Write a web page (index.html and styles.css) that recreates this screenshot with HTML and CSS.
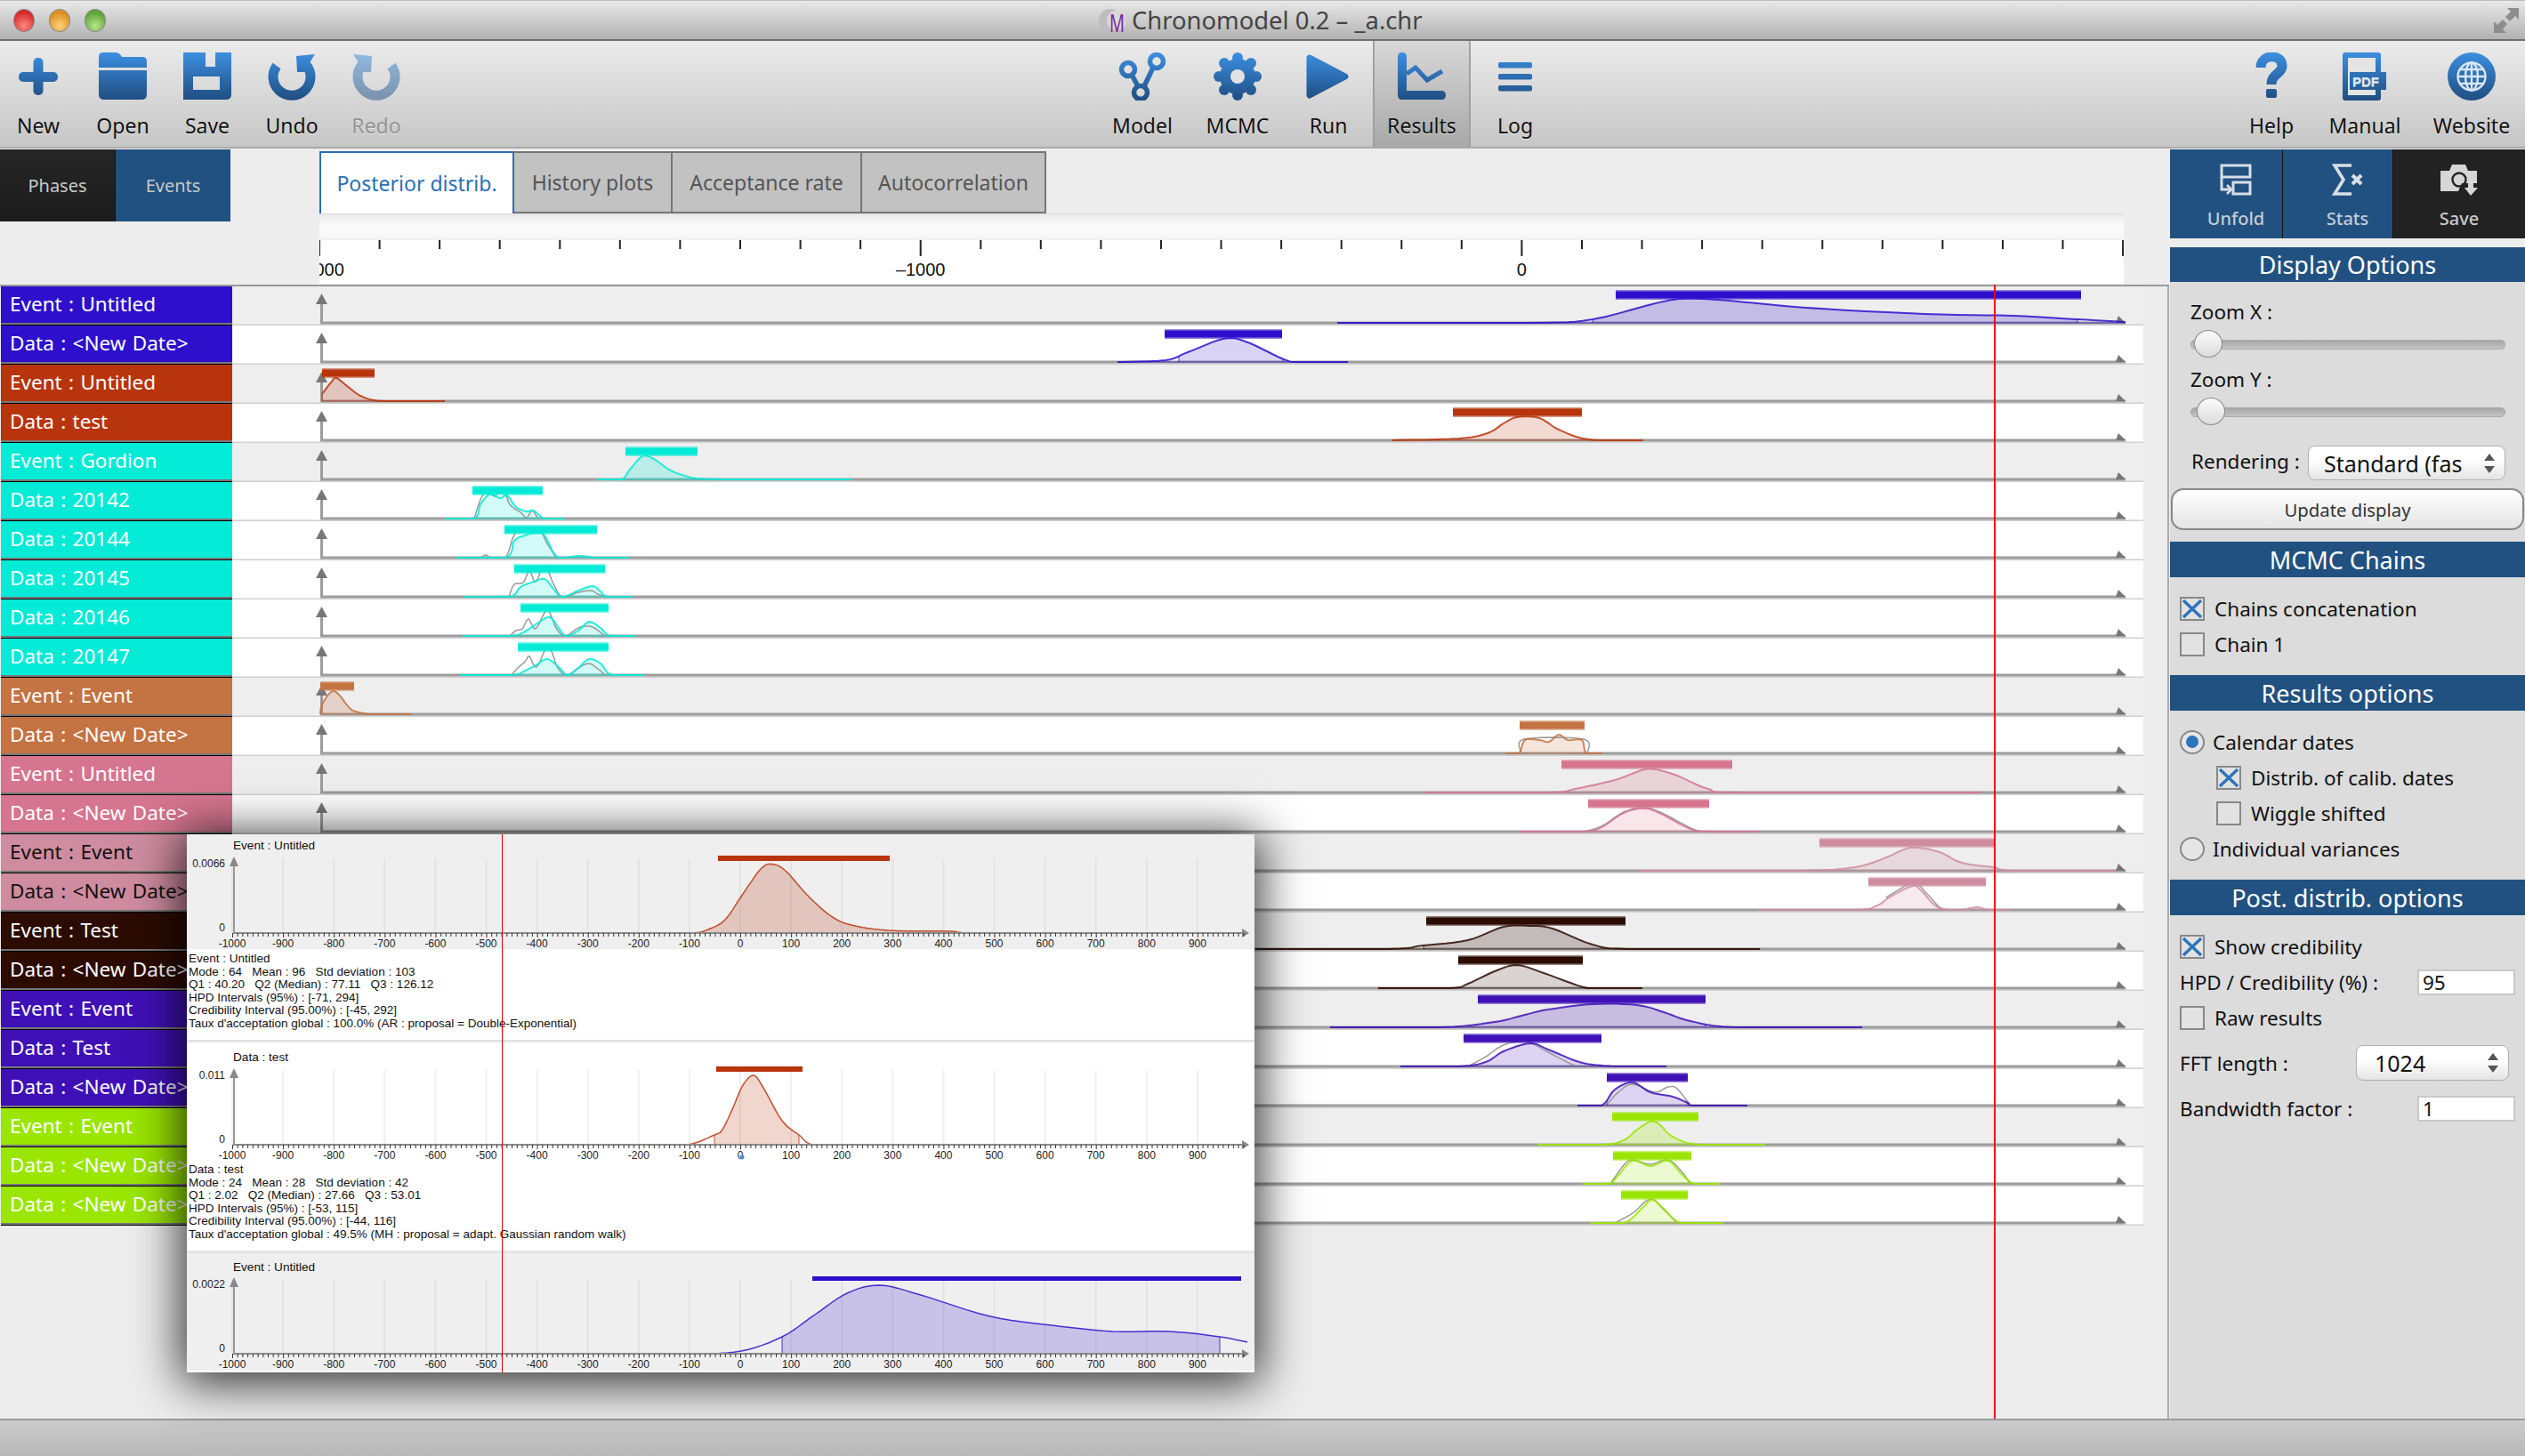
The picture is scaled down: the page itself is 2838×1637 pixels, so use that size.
FILE: index.html
```html
<!DOCTYPE html>
<html lang="en">
<head>
    <meta charset="UTF-8">
    <title>Chronomodel 0.2 - _a.chr</title>
    <link rel="stylesheet" href="styles.css">
</head>
<body>
    <svg class="defs" width="0" height="0">
        <defs>
            <linearGradient id="blue" gradientUnits="userSpaceOnUse" x1="0" y1="0" x2="0" y2="54">
                <stop offset="0" stop-color="#3c8fe2"/>
                <stop offset="1" stop-color="#1f4d80"/>
            </linearGradient>
        </defs>
    </svg>

    <div class="window">
        <div class="titlebar">
            <div class="lights">
                <span class="light light-red"></span>
                <span class="light light-yellow"></span>
                <span class="light light-green"></span>
            </div>
            <svg class="app-logo" width="32" height="40" viewBox="0 0 32 40">
                <circle cx="15" cy="20" r="13" fill="#bdbdbd"/>
                <circle cx="22" cy="20" r="11" fill="#d8d8d8"/>
                <text x="14" y="33" class="logo-m" textLength="17" lengthAdjust="spacingAndGlyphs">M</text>
            </svg>
            <span class="title-text">Chronomodel 0.2 – _a.chr</span>
            <svg class="fullscreen" width="30" height="30" viewBox="0 0 30 30">
                <path d="M16 1H29V14L25 10L19 16L14 11L20 5Z" fill="#8e8e8e"/>
                <path d="M1 16V29H15L11 25L16 19L11 14L5 20Z" fill="#8e8e8e"/>
            </svg>
        </div>

        <div class="toolbar">
            <div class="tool-group tool-group-left">
                <div class="tool">
                    <svg class="tool-icon" viewBox="0 0 54 54"><rect x="5" y="22" width="44" height="11" rx="5" fill="url(#blue)"/><rect x="21.5" y="6" width="11" height="42" rx="5" fill="url(#blue)"/></svg>
                    <span>New</span>
                </div>
                <div class="tool">
                    <svg class="tool-icon" viewBox="0 0 54 54"><path d="M0 17V5Q0 0 5 0H19Q23 0 26 5H49Q54 5 54 10V17Z" fill="url(#blue)"/><path d="M0 20H54V47Q54 53 48 53H6Q0 53 0 47Z" fill="url(#blue)"/></svg>
                    <span>Open</span>
                </div>
                <div class="tool">
                    <svg class="tool-icon" viewBox="0 0 54 54"><path fill-rule="evenodd" d="M0 0H54V47Q54 53 48 53H0ZM25 0V16H36V0ZM11 27V42H41V27Z" fill="url(#blue)"/></svg>
                    <span>Save</span>
                </div>
                <div class="tool">
                    <svg class="tool-icon" viewBox="0 0 54 54"><path d="M10 15A21 21 0 1 0 44 15" fill="none" stroke="url(#blue)" stroke-width="11"/><polygon points="32,4 53,2 48,10 46,22 33,22" fill="url(#blue)"/></svg>
                    <span>Undo</span>
                </div>
                <div class="tool tool-disabled">
                    <svg class="tool-icon" viewBox="0 0 54 54"><path d="M10 15A21 21 0 1 0 44 15" fill="none" stroke="url(#blue)" stroke-width="11"/><polygon points="22,4 1,2 6,10 8,22 21,22" fill="url(#blue)"/></svg>
                    <span>Redo</span>
                </div>
            </div>

            <div class="tool-group tool-group-center">
                <div class="tool w110">
                    <svg class="tool-icon" viewBox="0 0 54 54" fill="none" stroke="url(#blue)" stroke-width="5.5"><circle cx="11" cy="19" r="7.5"/><circle cx="43" cy="10" r="7.5"/><circle cx="25" cy="45" r="7.5"/><path d="M15 25L22 38M39 17L29 38"/></svg>
                    <span>Model</span>
                </div>
                <div class="tool w104">
                    <svg class="tool-icon" viewBox="0 0 54 54"><g fill="url(#blue)"><circle cx="27" cy="27" r="20"/><circle cx="27" cy="6" r="6"/><circle cx="27" cy="48" r="6"/><circle cx="6" cy="27" r="6"/><circle cx="48" cy="27" r="6"/><circle cx="12" cy="12" r="6"/><circle cx="42" cy="12" r="6"/><circle cx="12" cy="42" r="6"/><circle cx="42" cy="42" r="6"/></g><circle cx="27" cy="27" r="8" fill="#e2e2e2"/></svg>
                    <span>MCMC</span>
                </div>
                <div class="tool w100">
                    <svg class="tool-icon" viewBox="0 0 54 54"><polygon points="6,6 46,27 6,48" fill="url(#blue)" stroke="url(#blue)" stroke-width="7" stroke-linejoin="round"/></svg>
                    <span>Run</span>
                </div>
                <div class="tool w110 tool-active">
                    <svg class="tool-icon" viewBox="0 0 54 54"><path d="M0 5Q0 0 5 0T10 5V43H49Q54 43 54 48T49 53H5Q0 53 0 48Z" fill="url(#blue)"/><polyline points="10,24 20,17 33,31 50,21" fill="none" stroke="url(#blue)" stroke-width="5"/></svg>
                    <span>Results</span>
                </div>
                <div class="tool w100">
                    <svg class="tool-icon" viewBox="0 0 54 54"><rect x="8" y="11" width="38" height="6.5" rx="2" fill="url(#blue)"/><rect x="8" y="24" width="38" height="6.5" rx="2" fill="url(#blue)"/><rect x="8" y="37" width="38" height="6.5" rx="2" fill="url(#blue)"/></svg>
                    <span>Log</span>
                </div>
            </div>

            <div class="tool-group tool-group-right">
                <div class="tool w90">
                    <svg class="tool-icon" viewBox="0 0 54 54"><path d="M15 17C15 1 39 1 39 15C39 25 27 23 27 36" fill="none" stroke="url(#blue)" stroke-width="11"/><rect x="21" y="41" width="12" height="10" rx="2" fill="url(#blue)"/></svg>
                    <span>Help</span>
                </div>
                <div class="tool w120">
                    <svg class="tool-icon" viewBox="0 0 54 54"><rect x="2" y="0" width="43" height="54" rx="3" fill="url(#blue)"/><rect x="8" y="6" width="31" height="42" fill="#e4e4e4"/><rect x="10" y="22" width="41" height="20" fill="url(#blue)"/><text x="13" y="38" class="pdf-text">PDF</text></svg>
                    <span>Manual</span>
                </div>
                <div class="tool w120">
                    <svg class="tool-icon" viewBox="0 0 54 54"><circle cx="27" cy="27" r="27" fill="url(#blue)"/><g fill="none" stroke="#dbe6f2" stroke-width="2.4"><circle cx="27" cy="27" r="15.5"/><ellipse cx="27" cy="27" rx="7" ry="15.5"/><path d="M27 11V43M11 27H43M13 19H41M13 35H41"/></g></svg>
                    <span>Website</span>
                </div>
            </div>
        </div>

        <div class="main">
            <div class="results">
                <div class="head">
                    <div class="side-tabs">
                        <div class="side-tab side-tab-dark">Phases</div>
                        <div class="side-tab side-tab-blue">Events</div>
                    </div>
                    <div class="graph-head">
                        <div class="tabs">
                            <div class="tab tab-active">Posterior distrib.</div>
                            <div class="tab tab-history">History plots</div>
                            <div class="tab tab-accept">Acceptance rate</div>
                            <div class="tab tab-auto">Autocorrelation</div>
                        </div>
                        <div class="ruler-fade"></div>
                        <svg class="ruler" id="ruler" viewBox="359 271 2028 49"></svg>
                    </div>
                </div>
                <div class="rows" id="rows"></div>
                <div class="cursor"></div>
            </div>

            <div class="panel">
                <div class="panel-buttons">
                    <div class="panel-btn panel-btn-unfold">
                        <svg width="36" height="36" viewBox="0 0 36 36" fill="none" stroke="#d8dfe6" stroke-width="3"><rect x="2" y="2" width="32" height="13"/><rect x="15" y="21" width="19" height="13"/><path d="M2 15V29H11"/><path d="M8 24L13 29L8 34" stroke-width="2.5"/></svg>
                        <span>Unfold</span>
                    </div>
                    <div class="panel-btn panel-btn-stats">
                        <svg width="36" height="36" viewBox="0 0 36 36" fill="none" stroke="#d8dfe6"><path d="M22 2H3L13 18L3 34H22" stroke-width="3.6"/><path d="M23 13L33 23M33 13L23 23" stroke-width="4"/></svg>
                        <span>Stats</span>
                    </div>
                    <div class="panel-btn panel-btn-save">
                        <svg width="42" height="36" viewBox="0 0 42 36"><path d="M0 31V8H10L13 1H28L31 8H41V22H24L20 31Z" fill="#d6d6d6"/><circle cx="21" cy="18" r="7.5" fill="none" stroke="#222" stroke-width="2.4"/><path d="M31 20V27H27L34 36L42 27H37V20Z" fill="#d6d6d6"/></svg>
                        <span>Save</span>
                    </div>
                </div>

                <div class="section-title section-title-first">Display Options</div>
                <div class="section-body section-display">
                    <div class="opt opt-label">Zoom X :</div>
                    <div class="slider"><span class="knob knob-x"></span></div>
                    <div class="opt opt-label opt-zoomy">Zoom Y :</div>
                    <div class="slider"><span class="knob knob-y"></span></div>
                    <div class="render-row">
                        <span class="render-label">Rendering :</span>
                        <div class="select select-render">
                            <span>Standard (fas</span>
                            <svg width="12" height="24" viewBox="0 0 12 24"><path d="M6 1L12 9H0ZM6 23L0 15H12Z" fill="#555"/></svg>
                        </div>
                    </div>
                    <div class="update-btn">Update display</div>
                </div>

                <div class="section-title">MCMC Chains</div>
                <div class="section-body">
                    <div class="opt"><span class="check"><svg width="24" height="23" viewBox="0 0 24 23"><path d="M2 2L22 21M22 2L2 21" stroke="#2d74bb" stroke-width="3.4"/></svg></span>Chains concatenation</div>
                    <div class="opt"><span class="check"></span>Chain 1</div>
                </div>

                <div class="section-title">Results options</div>
                <div class="section-body">
                    <div class="opt"><span class="radio radio-on"></span>Calendar dates</div>
                    <div class="opt opt-sub"><span class="check"><svg width="24" height="23" viewBox="0 0 24 23"><path d="M2 2L22 21M22 2L2 21" stroke="#2d74bb" stroke-width="3.4"/></svg></span>Distrib. of calib. dates</div>
                    <div class="opt opt-sub"><span class="check"></span>Wiggle shifted</div>
                    <div class="opt"><span class="radio"></span>Individual variances</div>
                </div>

                <div class="section-title">Post. distrib. options</div>
                <div class="section-body section-last">
                    <div class="opt"><span class="check"><svg width="24" height="23" viewBox="0 0 24 23"><path d="M2 2L22 21M22 2L2 21" stroke="#2d74bb" stroke-width="3.4"/></svg></span>Show credibility</div>
                    <div class="opt opt-between">HPD / Credibility (%) :<span class="input">95</span></div>
                    <div class="opt"><span class="check"></span>Raw results</div>
                    <div class="opt opt-fft">FFT length :
                        <div class="select select-fft">
                            <span>1024</span>
                            <svg width="12" height="24" viewBox="0 0 12 24"><path d="M6 1L12 9H0ZM6 23L0 15H12Z" fill="#555"/></svg>
                        </div>
                    </div>
                    <div class="opt opt-between opt-band">Bandwidth factor :<span class="input">1</span></div>
                </div>
            </div>
        </div>

        <div class="statusbar"></div>

        <!-- Detached results window -->
        <div class="popup">
            <svg class="chart chart-grey" id="chart1" viewBox="210 938 1200 129"></svg>
            <div class="stats">
                <div>Event : Untitled</div>
                <div>Mode : 64 &nbsp; Mean : 96 &nbsp; Std deviation : 103</div>
                <div>Q1 : 40.20 &nbsp; Q2 (Median) : 77.11 &nbsp; Q3 : 126.12</div>
                <div>HPD Intervals (95%) : [-71, 294]</div>
                <div>Credibility Interval (95.00%) : [-45, 292]</div>
                <div>Taux d'acceptation global : 100.0% (AR : proposal = Double-Exponential)</div>
            </div>
            <svg class="chart chart-white" id="chart2" viewBox="210 1172 1200 132"></svg>
            <div class="stats">
                <div>Data : test</div>
                <div>Mode : 24 &nbsp; Mean : 28 &nbsp; Std deviation : 42</div>
                <div>Q1 : 2.02 &nbsp; Q2 (Median) : 27.66 &nbsp; Q3 : 53.01</div>
                <div>HPD Intervals (95%) : [-53, 115]</div>
                <div>Credibility Interval (95.00%) : [-44, 116]</div>
                <div>Taux d'acceptation global : 49.5% (MH : proposal = adapt. Gaussian random walk)</div>
            </div>
            <svg class="chart chart-grey chart-last" id="chart3" viewBox="210 1411 1200 132"></svg>
            <div class="popup-cursor"></div>
        </div>
    </div>

    <script src="script.js"></script>
</body>
</html>
```

FILE: styles.css
```css
* {
    box-sizing: border-box;
}

body {
    margin: 0;
    font-family: "Noto Sans", "DejaVu Sans", sans-serif;
    background: #ededed;
    color: #111;
}

.defs {
    display: block;
    height: 0;
}

.window {
    position: relative;
    width: 2838px;
    height: 1637px;
    overflow: hidden;
    display: flex;
    flex-direction: column;
    background: #ededed;
}

/* title bar */
.titlebar {
    height: 46px;
    flex: none;
    display: flex;
    align-items: center;
    padding-left: 15px;
    background: linear-gradient(#e8e8e8, #b2b2b2);
    border-top: 1px solid #bbb;
    border-bottom: 2px solid #707070;
}

.lights {
    display: flex;
    gap: 16px;
}

.light {
    width: 24px;
    height: 26px;
    border-radius: 50%;
    border: 1px solid #8a8a8a;
}

.light-red {
    background: radial-gradient(circle at 50% 75%, #ff8a80, #d62a2c 70%);
}

.light-yellow {
    background: radial-gradient(circle at 50% 75%, #ffd27a, #dc8f1e 70%);
}

.light-green {
    background: radial-gradient(circle at 50% 75%, #b8e68a, #5fa53a 70%);
}

.app-logo {
    margin-left: 1114px;
}

.logo-m {
    font: 27px "Noto Sans", sans-serif;
    fill: #7b2a98;
}

.title-text {
    margin-left: 7px;
    font-size: 27.4px;
    color: #444;
}

.fullscreen {
    margin-left: auto;
    margin-right: 6px;
}

/* toolbar */
.toolbar {
    height: 121px;
    flex: none;
    display: flex;
    background: linear-gradient(#ebebeb, #c6c6c6);
    border-bottom: 2px solid #aaa;
}

.tool-group {
    display: flex;
}

.tool-group-left {
    gap: 9px;
}

.tool-group-center {
    margin-left: 763px;
}

.tool-group-right {
    margin-left: auto;
}

.tool {
    width: 86px;
    display: flex;
    flex-direction: column;
    align-items: center;
    padding-top: 13px;
    font-size: 23px;
    line-height: 30px;
    text-shadow: 0 1px 0 rgba(255, 255, 255, 0.6);
}

.tool-icon {
    width: 54px;
    height: 54px;
    margin-bottom: 13px;
    display: block;
}

.tool-disabled {
    color: #949494;
}

.tool-disabled .tool-icon {
    opacity: 0.5;
}

.tool-active {
    background: linear-gradient(#d8d8d8, #a8a8a8);
    border-left: 2px solid #a0a0a0;
    border-right: 2px solid #a0a0a0;
}

.w90 { width: 90px; }
.w100 { width: 100px; }
.w104 { width: 104px; }
.w110 { width: 110px; }
.w120 { width: 120px; }

/* main area */
.main {
    flex: 1;
    display: flex;
    min-height: 0;
}

.results {
    position: relative;
    width: 2438px;
    flex: none;
    display: flex;
    flex-direction: column;
}

.head {
    height: 155px;
    flex: none;
    display: flex;
    border-bottom: 2px solid #999;
}

.side-tabs {
    width: 259px;
    height: 81px;
    flex: none;
    display: flex;
    margin-top: 1px;
    gap: 1px;
    background: #111;
}

.side-tab {
    flex: 1;
    display: flex;
    align-items: center;
    justify-content: center;
    font-size: 20px;
    color: #c9c9c9;
}

.side-tab-dark {
    background: linear-gradient(#262626, #1c1c1c);
}

.side-tab-blue {
    background: #215180;
}

.graph-head {
    width: 2028px;
    margin-left: 100px;
    flex: none;
    display: flex;
    flex-direction: column;
}

.tabs {
    height: 71px;
    margin-top: 3px;
    flex: none;
    display: flex;
    border-bottom: 1px solid #dcdcdc;
}

.tab {
    height: 70px;
    display: flex;
    align-items: center;
    justify-content: center;
    background: #c2c2c2;
    border: 2px solid #777;
    border-left: none;
    font-size: 23px;
    color: #555;
}

.tab-active {
    width: 219px;
    background: #fff;
    border-color: #2c6fb5;
    border-left: 2px solid #2c6fb5;
    border-bottom: none;
    color: #2c6fb5;
}

.tab-history { width: 178px; }
.tab-accept { width: 213px; }
.tab-auto { width: 207px; }

.ruler-fade {
    height: 29px;
    flex: none;
    background: linear-gradient(#e9e9e9, #fbfbfb 40%, #f8f8f8 85%, #efefef);
}

.ruler {
    display: block;
    width: 2028px;
    height: 49px;
    flex: none;
    background: #fff;
}

.ruler-label {
    font: 20px "Liberation Sans", sans-serif;
    text-anchor: middle;
    fill: #111;
}

.rows {
    flex: 1;
    border-right: 2px solid #adadad;
}

.row {
    height: 44px;
    display: flex;
}

.row-label {
    width: 260px;
    margin-left: 1px;
    flex: none;
    display: flex;
    align-items: center;
    padding: 0 0 4px 10px;
    font-size: 22.5px;
    word-spacing: 1.5px;
    color: #fff;
    border-bottom: 1px solid #000;
    box-shadow: inset 0 -2px 0 #777;
    white-space: nowrap;
    overflow: hidden;
}

.row-blue { background: #2e10cc; }
.row-red { background: #b8340c; }
.row-cyan { background: #03ebd6; }
.row-orange { background: #c47343; }
.row-pink { background: #d67590; }
.row-rose { background: #cf8ca0; color: #111; }
.row-brown { background: #2c0b00; }
.row-indigo { background: #3f10b6; }
.row-lime { background: #9ae600; }

.plot {
    display: block;
    width: 2148px;
    height: 44px;
    flex: none;
    background: #fff;
}

.plot-event {
    background: #eee;
}

.cursor {
    position: absolute;
    left: 2241px;
    top: 153px;
    bottom: 0;
    width: 2px;
    background: #f00;
}

/* right panel */
.panel {
    flex: 1;
    margin-left: 1px;
    display: flex;
    flex-direction: column;
    font-size: 22.5px;
    color: #111;
}

.panel-buttons {
    height: 100px;
    margin-top: 1px;
    flex: none;
    display: flex;
    gap: 1px;
    background: #111;
}

.panel-btn {
    display: flex;
    flex-direction: column;
    align-items: center;
    padding-top: 16px;
    font-size: 20px;
    font-weight: 500;
    line-height: 26px;
    color: #c4ccd4;
}

.panel-btn span {
    margin-top: 13px;
}

.panel-btn-unfold {
    width: 126px;
    padding-left: 22px;
    background: #215180;
}

.panel-btn-stats {
    width: 123px;
    padding-left: 22px;
    background: #215180;
}

.panel-btn-save {
    flex: 1;
    background: #222;
    color: #ccc;
}

.section-title {
    height: 40px;
    flex: none;
    display: flex;
    align-items: center;
    justify-content: center;
    background: #215180;
    color: #fff;
    font-size: 27px;
}

.section-title-first {
    height: 39px;
    margin-top: 10px;
}

.section-body {
    flex: none;
    padding: 15px 0;
    background: #dcdcdc;
}

.section-last {
    flex: 1;
}

.section-display {
    padding: 13px 0;
}

.opt {
    height: 40px;
    display: flex;
    align-items: center;
    padding-left: 11px;
    white-space: nowrap;
}

.opt-label {
    padding-left: 23px;
}

.opt-zoomy {
    margin: 3px 0 1px;
}

.opt-sub {
    padding-left: 52px;
}

.opt-between {
    justify-content: space-between;
    padding-right: 11px;
}

.opt-fft {
    justify-content: space-between;
    padding-right: 18px;
    margin-top: 11px;
}

.opt-band {
    margin-top: 11px;
}

.check,
.radio {
    width: 28px;
    height: 27px;
    flex: none;
    margin-right: 11px;
    display: flex;
    align-items: center;
    justify-content: center;
    border: 2px solid #888;
    background: #e2e2e2;
}

.radio {
    margin-right: 9px;
    border-radius: 50%;
    background: #e6e6e6;
}

.radio-on::after {
    content: "";
    width: 14px;
    height: 14px;
    border-radius: 50%;
    background: #2d74bb;
}

.slider {
    position: relative;
    height: 32px;
    margin: 1px 22px 0 23px;
    display: flex;
    align-items: center;
}

.slider::before {
    content: "";
    width: 100%;
    height: 9px;
    border-radius: 5px;
    background: linear-gradient(#a6a6a6, #c4c4c4);
    border: 1px solid #aaa;
}

.knob {
    position: absolute;
    top: 0;
    width: 32px;
    height: 31px;
    border-radius: 50%;
    border: 1px solid #8c8c8c;
    background: linear-gradient(#fbfbfb, #dcdcdc);
}

.knob-x { left: 4px; }
.knob-y { left: 7px; }

.render-row {
    height: 39px;
    margin-top: 22px;
    padding: 0 22px 0 24px;
    display: flex;
    align-items: center;
    justify-content: space-between;
}

.render-label {
    margin-bottom: 5px;
}

.select {
    height: 100%;
    display: flex;
    align-items: center;
    justify-content: space-between;
    background: linear-gradient(#fff 40%, #e4e4e4);
    border: 1px solid #b0b0b0;
    border-radius: 8px;
}

.select-render {
    width: 222px;
    padding: 0 11px 0 17px;
    font-size: 25px;
}

.select-fft {
    width: 172px;
    height: 40px;
    padding: 0 11px 0 20px;
    font-size: 25px;
}

.update-btn {
    height: 47px;
    margin: 9px 1px 0 1px;
    display: flex;
    align-items: center;
    justify-content: center;
    background: linear-gradient(#fff, #e4e4e4);
    border: 2px solid #888;
    border-radius: 14px;
    color: #333;
    font-size: 20.3px;
}

.input {
    width: 110px;
    height: 29px;
    padding-left: 4px;
    display: flex;
    align-items: center;
    background: #fff;
    border: 2px solid #c8c8c8;
}

.statusbar {
    height: 42px;
    flex: none;
    background: linear-gradient(#cbcbcb, #b8b8b8);
    border-top: 2px solid #9a9a9a;
}

/* detached results window */
.popup {
    position: absolute;
    left: 210px;
    top: 938px;
    width: 1200px;
    height: 605px;
    display: flex;
    flex-direction: column;
    background: #fff;
    box-shadow: 0 6px 50px 6px rgba(0, 0, 0, 0.8);
}

.chart {
    display: block;
    width: 1200px;
    height: 132px;
    flex: none;
}

#chart1 {
    height: 129px;
}

.chart-grey {
    background: #efefef;
}

.chart-white {
    background: #fff;
}

.chart-title {
    font: 13.6px "Liberation Sans", sans-serif;
    fill: #111;
}

.chart-tick {
    font: 12px "Liberation Sans", sans-serif;
    fill: #222;
    text-anchor: middle;
}

.chart-value {
    font: 12px "Liberation Sans", sans-serif;
    fill: #222;
    text-anchor: end;
}

.stats {
    height: 105px;
    flex: none;
    padding: 4px 0 0 2px;
    border-bottom: 3px solid #e4e4e4;
    font: 13.5px/14.6px "Liberation Sans", sans-serif;
    color: #111;
    white-space: nowrap;
}

.popup-cursor {
    position: absolute;
    left: 354px;
    top: 0;
    bottom: 0;
    width: 1px;
    background: #e00000;
}

.pdf-text {
    font: bold 15px "Liberation Sans", sans-serif;
    fill: #dce8f4;
}
```

FILE: script.js
```js
// colours of the curves, one per phase
var COLORS = {
    blue: '#2e10cc',
    red: '#b8340c',
    cyan: '#03ebd6',
    orange: '#c47343',
    pink: '#d67590',
    rose: '#cf8ca0',
    brown: '#2c0b00',
    indigo: '#3f10b6',
    lime: '#9ae600'
};

var BASE = 41;

// x values are page pixels, y values are pixels from the top of the row
var ROWS = [
    { name: 'Event : Untitled', c: 'blue', bar: [1816, 2339], fill: [1790, 2335], pts: [[1503,41],[1718,41],[1790,37],[1877,15.5],[1930,15],[2030,24],[2163,31],[2262,33],[2335,37],[2389,40]] },
    { name: 'Data : <New Date>', c: 'blue', bar: [1309, 1441], fill: [1325, 1442], pts: [[1256,41],[1310,39],[1335,30],[1375,15],[1400,18],[1443,38],[1460,41],[1515,41]] },
    { name: 'Event : Untitled', c: 'red', bar: [362, 421], fill: [362, 421], pts: [[362,33],[372,20],[378,15],[390,24],[405,35],[421,40],[440,41],[500,41]] },
    { name: 'Data : test', c: 'red', bar: [1633, 1778], fill: [1639, 1780], pts: [[1565,41],[1640,39],[1672,33],[1690,22],[1705,15],[1730,16],[1750,28],[1775,38],[1800,41],[1847,41]] },
    { name: 'Event : Gordion', c: 'cyan', bar: [703, 784], fill: [698, 786], pts: [[671,41],[698,41],[708,30],[722,15],[735,18],[752,30],[770,37],[786,40],[820,41],[957,41]] },
    { name: 'Data : 20142', c: 'cyan', bar: [531, 610], fill: [530, 612], pts: [[500,41],[533,41],[540,25],[550,14],[562,18],[570,15],[580,28],[592,33],[600,32],[612,41],[635,41]], ghost: [[533,41],[540,20],[548,8],[556,16],[565,6],[573,25],[585,34],[592,40],[598,32],[604,40]] },
    { name: 'Data : 20144', c: 'cyan', bar: [567, 671], fill: [568, 630], pts: [[513,41],[568,41],[578,22],[590,16],[603,13],[612,16],[622,35],[630,41],[650,39],[662,40],[670,41],[707,41]], ghost: [[540,41],[546,38],[552,41],[568,41],[576,20],[582,10],[590,12],[597,8],[607,10],[615,25],[625,41]] },
    { name: 'Data : 20145', c: 'cyan', bar: [578, 680], fill: [572, 683], pts: [[522,41],[572,41],[585,30],[600,24],[612,21],[622,32],[632,41],[650,34],[666,29],[675,35],[683,41],[711,41]], ghost: [[572,41],[578,27],[588,25],[595,12],[602,24],[612,6],[622,26],[632,41],[650,36],[664,34],[672,38],[680,41]] },
    { name: 'Data : 20146', c: 'cyan', bar: [585, 684], fill: [573, 686], pts: [[520,41],[573,41],[590,36],[605,26],[618,20],[628,32],[636,41],[650,35],[662,25],[675,32],[686,41],[714,41]], ghost: [[573,41],[580,35],[587,33],[594,22],[602,33],[615,12],[625,32],[635,41],[650,32],[660,30],[668,32],[680,41]] },
    { name: 'Data : 20147', c: 'cyan', bar: [582, 684], fill: [575, 688], pts: [[517,41],[575,41],[590,36],[602,30],[615,23],[628,32],[638,41],[650,33],[662,23],[675,28],[688,41],[724,41]], ghost: [[575,41],[582,33],[590,26],[595,20],[603,32],[616,9],[627,33],[637,41],[650,33],[662,28],[672,34],[680,41]] },
    { name: 'Event : Event', c: 'orange', bar: [360, 398], fill: [360, 400], pts: [[360,41],[362,30],[372,16],[380,18],[392,33],[400,38],[420,41],[462,41]] },
    { name: 'Data : <New Date>', c: 'orange', bar: [1708, 1781], fill: [1707, 1783], pts: [[1692,41],[1707,41],[1714,26],[1730,26],[1741,28],[1752,20],[1762,26],[1778,26],[1783,41],[1801,41]], ghost: [[1710,41],[1713,25],[1780,25],[1784,41]] },
    { name: 'Event : Untitled', c: 'pink', bar: [1755, 1947], fill: [1760, 1940], pts: [[1602,41],[1740,41],[1770,37],[1815,27],[1845,16],[1860,15],[1885,22],[1920,37],[1960,41],[2226,41]] },
    { name: 'Data : <New Date>', c: 'pink', bar: [1785, 1921], fill: [1780, 1915], pts: [[1708,41],[1780,41],[1800,36],[1825,20],[1847,15],[1865,20],[1900,38],[1925,41],[1977,41]], ghost: [[1780,41],[1800,35],[1825,19],[1847,14],[1868,20],[1905,39],[1925,41]] },
    { name: 'Event : Event', c: 'rose', bar: [2045, 2242], fill: [2045, 2270], pts: [[1841,41],[2020,41],[2085,37],[2120,26],[2140,17],[2155,15],[2180,20],[2205,32],[2240,37],[2265,41],[2378,41]] },
    { name: 'Data : <New Date>', c: 'rose', bar: [2100, 2232], fill: [2085, 2190], pts: [[1976,41],[2085,41],[2110,36],[2125,26],[2150,14],[2160,20],[2175,36],[2190,41],[2205,41],[2222,38],[2235,41],[2259,41]], ghost: [[2120,27],[2150,11],[2165,22],[2180,38],[2190,41]] },
    { name: 'Event : Test', c: 'brown', bar: [1603, 1827], fill: [1600, 1830], pts: [[1411,41],[1560,41],[1600,37],[1650,31],[1690,16],[1720,15],[1745,18],[1790,36],[1830,41],[1978,41]] },
    { name: 'Data : <New Date>', c: 'brown', bar: [1639, 1779], fill: [1640, 1782], pts: [[1549,41],[1630,41],[1650,36],[1680,22],[1705,15],[1735,24],[1780,40],[1800,41],[1846,41]] },
    { name: 'Event : Event', c: 'indigo', bar: [1661, 1917], fill: [1652, 1917], pts: [[1495,41],[1620,41],[1680,35],[1710,28],[1740,21],[1790,15],[1840,16],[1870,24],[1900,34],[1950,41],[2093,41]] },
    { name: 'Data : Test', c: 'indigo', bar: [1645, 1800], fill: [1652, 1800], pts: [[1574,41],[1640,41],[1670,36],[1690,24],[1720,15],[1740,22],[1775,36],[1800,40],[1825,41],[1873,41]], ghost: [[1650,41],[1670,30],[1690,17],[1715,13],[1740,25],[1770,40],[1785,41]] },
    { name: 'Data : <New Date>', c: 'indigo', bar: [1806, 1897], fill: [1806, 1897], pts: [[1773,41],[1800,41],[1815,23],[1835,15],[1855,26],[1880,31],[1897,38],[1905,41],[1964,41]], ghost: [[1805,41],[1820,25],[1835,17],[1860,26],[1875,20],[1885,22],[1900,41]] },
    { name: 'Event : Event', c: 'lime', bar: [1812, 1909], fill: [1810, 1910], pts: [[1728,41],[1800,41],[1825,36],[1840,24],[1855,15],[1865,18],[1880,32],[1910,41],[1984,41]] },
    { name: 'Data : <New Date>', c: 'lime', bar: [1813, 1901], fill: [1808, 1905], pts: [[1779,41],[1808,41],[1820,30],[1835,15],[1855,21],[1875,15],[1890,30],[1905,41],[1934,41]], ghost: [[1810,41],[1825,20],[1835,14],[1855,19],[1875,14],[1890,27],[1900,41]] },
    { name: 'Data : <New Date>', c: 'lime', bar: [1822, 1897], fill: [1825, 1890], pts: [[1788,41],[1825,41],[1845,25],[1857,15],[1870,25],[1890,41],[1937,41]], ghost: [[1815,41],[1835,30],[1855,14],[1870,26],[1885,41]] }
];

// Catmull-Rom through the points, sampled back to a polyline
function smooth(pts, base) {
    var out = [];
    for (var i = 0; i < pts.length - 1; i++) {
        var p0 = pts[Math.max(i - 1, 0)];
        var p1 = pts[i];
        var p2 = pts[i + 1];
        var p3 = pts[Math.min(i + 2, pts.length - 1)];
        for (var s = 0; s < 6; s++) {
            var t = s / 6;
            var x = 0.5 * (2 * p1[0] + (p2[0] - p0[0]) * t + (2 * p0[0] - 5 * p1[0] + 4 * p2[0] - p3[0]) * t * t + (3 * p1[0] - p0[0] - 3 * p2[0] + p3[0]) * t * t * t);
            var y = 0.5 * (2 * p1[1] + (p2[1] - p0[1]) * t + (2 * p0[1] - 5 * p1[1] + 4 * p2[1] - p3[1]) * t * t + (3 * p1[1] - p0[1] - 3 * p2[1] + p3[1]) * t * t * t);
            out.push([x, Math.min(y, base)]);
        }
    }
    out.push(pts[pts.length - 1]);
    return out;
}

function yAt(pts, x) {
    for (var i = 0; i < pts.length - 1; i++) {
        if (x >= pts[i][0] && x <= pts[i + 1][0]) {
            var t = (x - pts[i][0]) / ((pts[i + 1][0] - pts[i][0]) || 1);
            return pts[i][1] + (pts[i + 1][1] - pts[i][1]) * t;
        }
    }
    return pts[0][1];
}

function toStr(pts) {
    return pts.map(function (p) { return p[0].toFixed(1) + ',' + p[1].toFixed(1); }).join(' ');
}

// filled curve: credibility area, its two end lines, the curve and the zero line
function drawCurve(opt) {
    var pts = smooth(opt.pts, opt.base);
    var x1 = opt.fill[0];
    var x2 = opt.fill[1];
    var y1 = yAt(pts, x1);
    var y2 = yAt(pts, x2);
    var area = [[x1, y1]].concat(pts.filter(function (p) { return p[0] > x1 && p[0] < x2; }), [[x2, y2], [x2, opt.base], [x1, opt.base]]);
    var last = pts[pts.length - 1];
    var s = '';
    s += '<polygon points="' + toStr(area) + '" fill="' + opt.color + '" fill-opacity="' + opt.alpha + '"/>';
    if (opt.ghost) {
        s += '<polyline points="' + toStr(smooth(opt.ghost, opt.base)) + '" fill="none" stroke="#999" stroke-width="1.5"/>';
    }
    s += '<line x1="' + pts[0][0] + '" x2="' + last[0] + '" y1="' + opt.base + '" y2="' + opt.base + '" stroke="' + opt.color + '" stroke-opacity="0.35" stroke-width="2"/>';
    s += '<polyline points="' + toStr(pts) + '" fill="none" stroke="' + opt.color + '" stroke-opacity="0.85" stroke-width="' + opt.width + '"/>';
    if (!opt.noEnds) {
        s += '<path d="M' + x1 + ' ' + y1.toFixed(1) + 'V' + opt.base + 'M' + x2 + ' ' + y2.toFixed(1) + 'V' + opt.base + '" stroke="' + opt.color + '" stroke-opacity="0.8" stroke-width="1"/>';
    }
    return s;
}

function buildRows() {
    var html = '';
    ROWS.forEach(function (row) {
        var color = COLORS[row.c];
        var event = row.name.indexOf('Event') === 0;
        var s = '';
        s += '<rect x="261" y="42.5" width="2148" height="1.5" fill="#cfcfcf"/>';
        s += '<rect x="360" y="' + (BASE - 1.5) + '" width="2029" height="3" fill="#9c9c9c"/>';
        s += '<rect x="360" y="14" width="3" height="27" fill="#9c9c9c"/>';
        s += '<polygon points="355,20 361.5,8 368,20" fill="#777"/>';
        s += '<polygon points="2378,41 2381,33 2389,41" fill="#777"/>';
        s += drawCurve({ pts: row.pts, ghost: row.ghost, fill: row.fill, color: color, base: BASE, alpha: event ? 0.22 : 0.18, width: 2 });
        s += '<rect x="' + row.bar[0] + '" y="4" width="' + (row.bar[1] - row.bar[0]) + '" height="11" fill="' + color + '" fill-opacity="0.5"/>';
        s += '<rect x="' + row.bar[0] + '" y="5.5" width="' + (row.bar[1] - row.bar[0]) + '" height="8" fill="' + color + '"/>';
        html += '<div class="row">';
        html += '<div class="row-label row-' + row.c + '">' + row.name.replace('<', '&lt;').replace('>', '&gt;') + '</div>';
        html += '<svg class="plot' + (event ? ' plot-event' : '') + '" viewBox="261 0 2148 44">' + s + '</svg>';
        html += '</div>';
    });
    document.getElementById('rows').innerHTML = html;
}

function buildRuler() {
    var s = '';
    for (var i = 0; i <= 30; i++) {
        var x = 359 + i * 67.57;
        var major = i % 10 === 0;
        s += '<rect x="' + (x - 1).toFixed(1) + '" y="271" width="2" height="' + (major ? 18 : 10) + '" fill="#222"/>';
        if (major && i < 30) {
            s += '<text class="ruler-label" x="' + x.toFixed(1) + '" y="311">' + (i === 20 ? '0' : '–' + (2000 - i * 100)) + '</text>';
        }
    }
    document.getElementById('ruler').innerHTML = s;
}

var CHARTS = [
    {
        id: 'chart1', titleY: 955, title: 'Event : Untitled', max: '0.0066', grid: '#e3e3e3', base: 1049,
        color: '#b8340c', alpha: 0.22, bar: [807, 1000, 962, 6], fill: [716, 1100], noEnds: true,
        pts: [[716,1049],[776,1049],[796,1045],[815,1034],[833,1008],[856,976],[870,972],[884,980],[907,1006],[934,1030],[957,1040],[998,1046],[1067,1047],[1113,1049],[1400,1049]]
    },
    {
        id: 'chart2', titleY: 1193, title: 'Data : test', max: '0.011', grid: '#f0f0f0', base: 1287,
        color: '#b8340c', alpha: 0.2, bar: [805, 902, 1199, 6], fill: [803, 898], mark: [834, 1301],
        pts: [[755,1287],[778,1286],[803,1276],[812,1270],[824,1245],[835,1220],[847,1209],[858,1223],[879,1260],[898,1276],[913,1287],[948,1287]]
    },
    {
        id: 'chart3', titleY: 1431, title: 'Event : Untitled', max: '0.0022', grid: '#e3e3e3', base: 1524,
        color: '#2e10cc', alpha: 0.2, bar: [913, 1395, 1437, 5], fill: [879, 1371],
        pts: [[673,1524],[778,1524],[833,1521],[879,1505],[916,1480],[952,1456],[989,1447],[1035,1458],[1113,1482],[1182,1492],[1251,1499],[1315,1499],[1371,1505],[1402,1511]]
    }
];

function buildChart(c) {
    var zero = 832;
    var base = c.base;
    var s = '';
    s += '<text class="chart-title" x="262" y="' + c.titleY + '">' + c.title + '</text>';
    for (var v = -1000; v <= 900; v += 100) {
        var gx = zero + v * 0.571;
        s += '<rect x="' + (gx - 1).toFixed(1) + '" y="' + (base - 84) + '" width="2" height="84" fill="' + c.grid + '"/>';
    }
    s += drawCurve({ pts: c.pts, fill: c.fill, noEnds: c.noEnds, color: c.color, base: base, alpha: c.alpha, width: 1.5 });
    s += '<rect x="' + c.bar[0] + '" y="' + c.bar[2] + '" width="' + (c.bar[1] - c.bar[0]) + '" height="' + c.bar[3] + '" fill="' + c.color + '"/>';
    // axes
    s += '<rect x="262" y="' + (base - 80) + '" width="2" height="80" fill="#999"/>';
    s += '<polygon points="258,' + (base - 75) + ' 263,' + (base - 86) + ' 268,' + (base - 75) + '" fill="#888"/>';
    s += '<rect x="262" y="' + (base - 1) + '" width="1136" height="2" fill="#8c8c8c"/>';
    s += '<polygon points="1396,' + (base - 5) + ' 1404,' + base + ' 1396,' + (base + 5) + '" fill="#888"/>';
    for (var t = -1000; t <= 990; t += 10) {
        var x = zero + t * 0.571;
        s += '<rect x="' + x.toFixed(1) + '" y="' + base + '" width="1" height="' + (t % 100 === 0 ? 5 : 4) + '" fill="#333"/>';
    }
    for (var l = -1000; l <= 900; l += 100) {
        s += '<text class="chart-tick" x="' + (zero + l * 0.571).toFixed(1) + '" y="' + (base + 16) + '">' + l + '</text>';
    }
    s += '<text class="chart-value" x="253" y="' + (base - 74) + '">' + c.max + '</text>';
    s += '<text class="chart-value" x="253" y="' + (base - 2) + '">0</text>';
    if (c.mark) {
        s += '<circle cx="' + c.mark[0] + '" cy="' + c.mark[1] + '" r="2.5" fill="#4a90d9"/>';
    }
    document.getElementById(c.id).innerHTML = s;
}

buildRows();
buildRuler();
CHARTS.forEach(buildChart);
```
